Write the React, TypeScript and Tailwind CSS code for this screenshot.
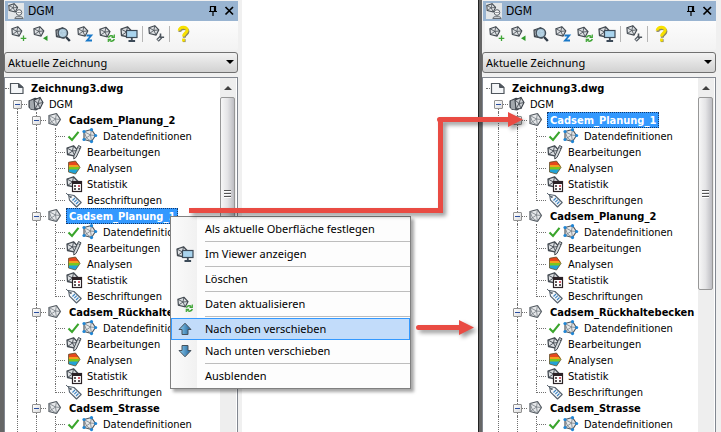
import type { ReactNode } from "react";
import { clsx } from "clsx";

/* ---------- icons ---------- */

const Mesh = ({ nodes = false }: { nodes?: boolean }) => (
  <g>
    <path
      d="M2 3.5 9.5 1.5 13.5 7.5 9.5 13.5 2 11.5Z"
      fill="#e6e8ea"
      stroke="#50575e"
      strokeWidth="1.2"
      strokeLinejoin="round"
    />
    <path
      d="M2 3.5 8.5 7 9.5 1.5M8.5 7 13.5 7.5M8.5 7 9.5 13.5M8.5 7 2 11.5M2 3.5 4.5 10 9.5 13.5"
      fill="none"
      stroke="#757c83"
      strokeWidth="0.8"
    />
    {nodes && (
      <g fill="#1f86d6">
        <circle cx="2" cy="3.5" r="1.6" />
        <circle cx="9.5" cy="1.7" r="1.6" />
        <circle cx="13.6" cy="7.5" r="1.6" />
        <circle cx="9.5" cy="13.6" r="1.6" />
        <circle cx="2" cy="11.5" r="1.6" />
      </g>
    )}
  </g>
);

const SmallMesh = () => (
  <g>
    <path
      d="M1 3 7.5 .8 12 5.5 9 11.2 1.5 9.5Z"
      fill="#dde0e3"
      stroke="#434a51"
      strokeWidth="1.3"
      strokeLinejoin="round"
    />
    <path
      d="M1 3 6.5 6 7.5.8M6.5 6 12 5.5M6.5 6 9 11.2M6.5 6 1.5 9.5"
      fill="none"
      stroke="#434a51"
      strokeWidth=".9"
    />
  </g>
);

const Icon = ({ children }: { children: ReactNode }) => (
  <svg
    viewBox="0 0 16 16"
    aria-hidden="true"
    className="size-4 shrink-0 overflow-visible"
  >
    {children}
  </svg>
);

const MeshIcon = () => (
  <Icon>
    <Mesh />
  </Icon>
);

const NodesIcon = () => (
  <Icon>
    <Mesh nodes />
  </Icon>
);

const FileIcon = () => (
  <Icon>
    <path
      d="M1.5 3.5h8l4.5 4v6H1.5Z"
      fill="#f4f6f8"
      stroke="#50575e"
      strokeWidth="1.2"
    />
    <path d="M9.5 3.5v4H14Z" fill="#50575e" stroke="#50575e" />
  </Icon>
);

const GroupIcon = () => (
  <Icon>
    <path
      d="M1 5 7 2.2 11 3v9l-3 2-5-.8L1 11Z"
      fill="#7a8188"
      stroke="#3c434a"
      strokeWidth="1.1"
    />
    <path d="M3 4.5v8.5M5 4v9.5" stroke="#d5d9dc" strokeWidth=".9" />
    <path
      d="M6 4 12 1.5 15 6.5 12 12.5 7 13Z"
      fill="#cdd1d5"
      stroke="#3c434a"
      strokeWidth="1.1"
    />
    <path
      d="M6 4 10 7.5 12 1.5M10 7.5 15 6.5M10 7.5 12 12.5M10 7.5 7 13"
      fill="none"
      stroke="#3c434a"
      strokeWidth=".8"
    />
  </Icon>
);

const CheckIcon = () => (
  <Icon>
    <path
      d="M3.5 8.5 7 12 13.5 3.8"
      fill="none"
      stroke="#3aa52c"
      strokeWidth="2.1"
    />
  </Icon>
);

const EditIcon = () => (
  <Icon>
    <g transform="translate(0 1)">
      <SmallMesh />
    </g>
    <path
      d="M12.5 1.5 15 2.8 10.2 13.2 7.8 15 7.8 12Z"
      fill="#d4d8db"
      stroke="#434a51"
      strokeWidth="1"
    />
    <path d="M12.5 3.8 14 4.6" stroke="#434a51" />
  </Icon>
);

const AnalysisIcon = () => (
  <Icon>
    <path d="M2.5 2 9.5 1 13.4 5.5H2.5Z" fill="#e8471c" />
    <path d="M2.5 5h10.6l1 2.5H2.5Z" fill="#f2a01e" />
    <path d="M2.5 7h11.4l-1.6 3H2.5Z" fill="#7cc61c" />
    <path d="M2.5 9.6h10.2L9.5 14l-7-2Z" fill="#22a3d6" />
    <path
      d="M2.5 2.4 9.5 1 14 7.5 9.5 14 2.5 12Z"
      fill="none"
      stroke="#60502c"
      strokeWidth=".8"
    />
  </Icon>
);

const StatisticIcon = () => (
  <Icon>
    <SmallMesh />
    <rect
      x="6.5"
      y="5.5"
      width="9"
      height="10"
      fill="#fff"
      stroke="#2b2226"
      strokeWidth="1.2"
    />
    <path d="M6 6.8h10" stroke="#2b2226" strokeWidth="2.4" />
    <path d="M8 10h2M8 13h2M12 13h2" stroke="#2b2226" strokeWidth="1.7" />
    <path d="M12 10h2" stroke="#c8283c" strokeWidth="1.7" />
  </Icon>
);

const TagIcon = () => (
  <Icon>
    <path
      d="M2.5 2.5 8 3.5 15.2 10.5 10.5 15 3.5 8.2Z"
      fill="#f2f5f8"
      stroke="#56616c"
      strokeWidth="1.1"
      strokeLinejoin="round"
    />
    <path d="M0 1 4 4.8" stroke="#56616c" />
    <circle cx="4.8" cy="5" r="1" fill="#56616c" />
    <path
      d="M6.5 8.5 9 6M8.3 10.2 10.8 7.7M10 12 12.5 9.5"
      stroke="#3d84c2"
      strokeWidth="1.1"
    />
  </Icon>
);

const RefreshIcon = () => (
  <Icon>
    <g transform="translate(0 .5) scale(.92)">
      <SmallMesh />
    </g>
    <g fill="none" stroke="#3fa535" strokeWidth="1.5">
      <path d="M9.4 11.8a3 3 0 0 1 5-1.2M15.3 13a3 3 0 0 1-5 1.3" />
      <path d="M15.3 8.6v2.7h-2.8M9.3 16v-2.6h2.8" strokeWidth="1.2" />
    </g>
  </Icon>
);

const ViewerIcon = () => (
  <Icon>
    <g transform="translate(-1 0)">
      <SmallMesh />
    </g>
    <rect
      x="5.5"
      y="4.5"
      width="10.5"
      height="7"
      fill="#a9d4ee"
      stroke="#3c4a58"
      strokeWidth="1.2"
    />
    <path d="M10.8 11.5v3M7.5 15h6.6" stroke="#3c4a58" strokeWidth="1.8" />
  </Icon>
);

const AddIcon = () => (
  <Icon>
    <g transform="scale(.9)">
      <SmallMesh />
    </g>
    <path d="M12.5 9.5v5.6M9.7 12.3h5.6" stroke="#3fa535" strokeWidth="1.3" />
  </Icon>
);

const ImportIcon = () => (
  <Icon>
    <g transform="scale(.9)">
      <SmallMesh />
    </g>
    <path d="M14.5 9.5v5.6L10 12.3Z" fill="#2f9a2a" />
  </Icon>
);

const SearchIcon = () => (
  <Icon>
    <g transform="translate(0 1)">
      <SmallMesh />
    </g>
    <path d="m11 11 3.8 4" stroke="#2f3a46" strokeWidth="2.4" />
    <circle
      cx="7.8"
      cy="7"
      r="4.7"
      fill="#b4d3e6"
      fillOpacity=".9"
      stroke="#44505b"
      strokeWidth="1.5"
    />
  </Icon>
);

const ElevationIcon = () => (
  <Icon>
    <g transform="scale(.9)">
      <SmallMesh />
    </g>
    <path
      d="M9.5 9.5h4.8L10 14.5h5"
      fill="none"
      stroke="#1878c8"
      strokeWidth="1.8"
    />
  </Icon>
);

const SettingsIcon = () => (
  <Icon>
    <g transform="translate(0 -1) scale(.9)">
      <SmallMesh />
    </g>
    <path d="m9.5 14.5 3.5-3.5" stroke="#4b535b" strokeWidth="3.4" />
    <path
      d="M12.5 7.5v3.8h3.6"
      fill="none"
      stroke="#4b535b"
      strokeWidth="1.6"
    />
    <path d="m9.8 14.2 2.4-2.4" stroke="#e5e8ea" strokeWidth="1.2" />
  </Icon>
);

const HelpIcon = () => (
  <Icon>
    <g fill="none" strokeWidth="3">
      <path
        d="M4.2 5.2C4 .8 12.6.6 12.2 5 12 7.8 8.5 7.6 8.5 11"
        stroke="#8a8468"
        transform="translate(.7 .7)"
      />
      <path
        d="M4.2 4.6C4 .2 12.6 0 12.2 4.4 12 7.2 8.5 7 8.5 10.6"
        stroke="#f7e000"
      />
      <path d="M7.8 14.6h2.8" stroke="#8a8468" />
      <path d="M7.1 14h2.8" stroke="#f7e000" />
    </g>
  </Icon>
);

const ArrowGlyph = ({ down = false }: { down?: boolean }) => (
  <Icon>
    <defs>
      <linearGradient id={down ? "down" : "up"}>
        <stop offset="0" stopColor="#8fd0f2" />
        <stop offset="1" stopColor="#1c5f98" />
      </linearGradient>
    </defs>
    <path
      d={
        down
          ? "M5 2.5h6v5h3L8 13.8 2 7.5h3Z"
          : "M8 2.2 14 8.5h-3v5H5v-5H2Z"
      }
      fill={down ? "url(#down)" : "url(#up)"}
      stroke="#47525c"
      strokeWidth="1"
    />
  </Icon>
);

const AppIcon = () => (
  <Icon>
    <rect width="16" height="16" fill="#e3e6e8" />
    <g transform="scale(.8)">
      <SmallMesh />
    </g>
    <circle cx="11" cy="9.5" r="2.8" fill="#f5f5f5" stroke="#5b6269" />
    <path
      d="M6.8 15.5c.2-3 8-3 8.4 0Z"
      fill="#c9cdd0"
      stroke="#5b6269"
      strokeWidth=".9"
    />
    <path d="M9.6 9.5h1M11.5 9.5h1" stroke="#3c434a" />
  </Icon>
);

/* ---------- tree ---------- */

// one 19px column of dotted connector lines
const Guide = ({
  branch = false,
  last = false,
}: {
  branch?: boolean;
  last?: boolean;
}) => (
  <span className="h-4 w-[19px] shrink-0 pl-[9px]">
    <span
      className={clsx(
        "block border-l border-dotted border-[#707070]",
        last ? "h-[9px]" : "h-4"
      )}
    >
      {branch && (
        <span className="block h-[9px] border-b border-dotted border-[#707070]" />
      )}
    </span>
  </span>
);

const Expander = ({ root = false }: { root?: boolean }) => (
  <span className="relative h-4 w-[19px] shrink-0">
    <span
      className={clsx(
        "absolute bottom-0 left-[9px] border-l border-dotted border-[#707070]",
        root ? "h-2" : "h-4"
      )}
    />
    <span className="absolute top-2 right-0 w-2 border-b border-dotted border-[#707070]" />
    <button
      aria-label="Zuklappen"
      className="absolute top-1 left-[5px] flex size-[9px] items-center justify-center rounded-[1px] border border-[#919191] bg-linear-to-br from-white to-[#dcdcdc]"
    >
      <span className="h-px w-[5px] bg-[#2b4fa0]" />
    </button>
  </span>
);

const entries = [
  { label: "Datendefinitionen", icon: <NodesIcon />, checked: true },
  { label: "Bearbeitungen", icon: <EditIcon /> },
  { label: "Analysen", icon: <AnalysisIcon /> },
  { label: "Statistik", icon: <StatisticIcon /> },
  { label: "Beschriftungen", icon: <TagIcon />, last: true },
];

type SurfaceData = { name: string; entryCount: number };

const Surface = ({
  surface,
  selected,
}: {
  surface: SurfaceData;
  selected: boolean;
}) => (
  <li>
    <div className="flex h-4 items-center pl-[3px]">
      <Guide />
      <Expander />
      <span className="flex w-5 shrink-0 pl-px">
        <MeshIcon />
      </span>
      <span
        className={clsx(
          "h-4 px-[3px] font-bold",
          selected &&
            "bg-[#3399ff] text-white outline-1 -outline-offset-1 outline-dotted outline-[#14396b]"
        )}
      >
        {surface.name}
      </span>
    </div>
    <ul>
      {entries.slice(0, surface.entryCount).map((entry) => (
        <li key={entry.label} className="flex h-4 items-center pl-[3px]">
          <Guide />
          <Guide />
          <Guide branch last={entry.last} />
          {entry.checked && <CheckIcon />}
          <span className="flex pl-px">{entry.icon}</span>
          <span className="h-4 pl-[5px]">{entry.label}</span>
        </li>
      ))}
    </ul>
  </li>
);

const Tree = ({
  surfaces,
  selected,
  indented,
}: {
  surfaces: SurfaceData[];
  selected: string;
  indented: boolean;
}) => (
  <div
    className={clsx(
      "min-w-0 flex-1 overflow-hidden pt-[2px] leading-[18px] whitespace-nowrap",
      indented && "pl-[3px]"
    )}
  >
    <div className="flex h-4 items-center">
      <span className="w-1 border-b border-dotted border-[#707070]" />
      <FileIcon />
      <span className="h-4 pl-[6px] font-bold">Zeichnung3.dwg</span>
    </div>
    <div className="flex h-4 items-center pl-[3px]">
      <Expander root />
      <span className="flex pl-px">
        <GroupIcon />
      </span>
      <span className="h-4 pl-[5px]">DGM</span>
    </div>
    <ul>
      {surfaces.map((surface) => (
        <Surface
          key={surface.name}
          surface={surface}
          selected={surface.name === selected}
        />
      ))}
    </ul>
  </div>
);

const Scrollbar = () => (
  <div className="mr-px flex w-4 shrink-0 flex-col bg-[#eeeeee] pt-px">
    <div className="flex h-[18px] items-center justify-center">
      <svg viewBox="0 0 8 4" className="h-1 w-2" aria-hidden="true">
        <path d="M4 0 8 4H0Z" fill="#404040" />
      </svg>
    </div>
    <div className="flex h-[193px] w-[15px] flex-col items-center justify-center gap-px rounded-xs border border-[#979797] bg-linear-to-r from-[#f7f7f7] via-[#e4e4e6] to-[#bdbdc2]">
      <span className="h-[2px] w-[7px] border-t border-[#555555] bg-white" />
      <span className="h-[2px] w-[7px] border-t border-[#555555] bg-white" />
      <span className="h-[2px] w-[7px] border-t border-[#555555] bg-white" />
    </div>
  </div>
);

/* ---------- palette ---------- */

const tools = [
  { label: "Neu", icon: <AddIcon /> },
  { label: "Importieren", icon: <ImportIcon /> },
  { label: "Suchen", icon: <SearchIcon /> },
  { label: "Höhe", icon: <ElevationIcon /> },
  { label: "Aktualisieren", icon: <RefreshIcon /> },
  { label: "Viewer", icon: <ViewerIcon /> },
];

const ToolButton = ({
  label,
  children,
}: {
  label: string;
  children: ReactNode;
}) => (
  <button
    aria-label={label}
    className="flex h-[22px] w-[22px] items-center justify-center"
  >
    {children}
  </button>
);

const Divider = () => <span className="mx-[2px] h-4 w-px bg-[#b5b5b5]" />;

const Palette = ({
  surfaces,
  selected,
  docked = false,
}: {
  surfaces: SurfaceData[];
  selected: string;
  docked?: boolean;
}) => (
  <section
    className={clsx(
      "flex shrink-0 bg-[#f0f0f0]",
      docked ? "w-[243px]" : "w-[242px]"
    )}
  >
    <div
      className={clsx(
        "w-1 shrink-0 bg-[#666666]",
        docked && "border-l border-[#222222]"
      )}
    />
    <div
      className={clsx(
        "flex min-w-0 flex-1 flex-col pt-px",
        docked ? "pr-[5px]" : "pr-1"
      )}
    >
      <header className="ml-px flex h-5 shrink-0 items-center bg-[#99b4d1] px-[3px]">
        <AppIcon />
        <h2 className="flex-1 pl-1 text-[12px] leading-4">DGM</h2>
        <button aria-label="Anheften" className="mr-1 flex size-3">
          <svg viewBox="0 0 12 12" className="size-3">
            <path
              d="M3.5 6.5v-5h5v5M2 6.5h8M6 7v4M7.5 2v4.5"
              fill="none"
              stroke="#000"
              strokeWidth="1.2"
            />
          </svg>
        </button>
        <button aria-label="Schließen" className="flex size-3">
          <svg viewBox="0 0 12 12" className="size-3">
            <path d="m2.5 2 7.5 7.5M10 2 2.5 9.5" stroke="#000" strokeWidth="1.7" />
          </svg>
        </button>
      </header>
      <div className="ml-[3px] flex h-[29px] shrink-0 items-center rounded-b-xs bg-linear-to-b from-[#fcfcfc] to-[#f3f3f3] pb-[3px] pl-px">
        {tools.map((tool) => (
          <ToolButton key={tool.label} label={tool.label}>
            {tool.icon}
          </ToolButton>
        ))}
        <Divider />
        <ToolButton label="Einstellungen">
          <SettingsIcon />
        </ToolButton>
        <Divider />
        <ToolButton label="Hilfe">
          <HelpIcon />
        </ToolButton>
      </div>
      <div className="relative mt-[2px] shrink-0">
        <select
          aria-label="Zeichnung"
          className="block h-[21px] w-full appearance-none rounded-[3px] border border-[#707070] bg-linear-to-b from-[#f2f2f2] to-[#d2d2d2] pl-[3px] font-['Noto_Sans',sans-serif] leading-4"
        >
          <option>Aktuelle Zeichnung</option>
        </select>
        <svg
          viewBox="0 0 8 4"
          className="pointer-events-none absolute top-2 right-1 h-1 w-2"
          aria-hidden="true"
        >
          <path d="M0 0H8L4 4Z" fill="#000" />
        </svg>
      </div>
      <div className="mt-1 flex min-h-0 flex-1 border border-b-0 border-[#828790] bg-white">
        <Tree surfaces={surfaces} selected={selected} indented={docked} />
        <Scrollbar />
      </div>
    </div>
  </section>
);

/* ---------- context menu ---------- */

const menu = [
  { label: "Als aktuelle Oberfläche festlegen", separated: true },
  { label: "Im Viewer anzeigen", icon: <ViewerIcon />, separated: true },
  { label: "Löschen", separated: true },
  { label: "Daten aktualisieren", icon: <RefreshIcon />, separated: true },
  { label: "Nach oben verschieben", icon: <ArrowGlyph />, active: true },
  {
    label: "Nach unten verschieben",
    icon: <ArrowGlyph down />,
    separated: true,
  },
  { label: "Ausblenden" },
];

const ContextMenu = () => (
  <div
    role="menu"
    className="absolute top-[216px] left-[170px] w-[241px] border border-[#808080] bg-[#fdfdfd] bg-linear-to-r from-[#fbfbfb] to-[#f1f1f1] bg-[length:26px_100%] bg-no-repeat py-px font-['Noto_Sans',sans-serif] text-[11px] shadow-[3px_3px_3px_rgba(0,0,0,0.35)]"
  >
    {menu.map((item) => (
      <div key={item.label}>
        <button
          role="menuitem"
          className={clsx(
            "flex h-[22px] w-full items-center border px-[5px] text-left leading-4",
            item.active
              ? "border-[#3399ff] bg-[#c2dcfa]"
              : "border-transparent"
          )}
        >
          <span className="w-7 shrink-0">{item.icon}</span>
          {item.label}
        </button>
        {item.separated && (
          <div className="my-px ml-[34px] h-px bg-[#bdbdbd]" />
        )}
      </div>
    ))}
  </div>
);

const Arrows = () => (
  <svg
    viewBox="0 0 721 432"
    aria-hidden="true"
    className="pointer-events-none absolute top-0 left-0 h-[432px] w-[721px] drop-shadow-[3px_3px_2px_rgba(0,0,0,0.4)]"
  >
    <g fill="none" stroke="#e94b43" strokeWidth="5">
      <path d="M189 210.5H440.5V119.5" />
      <path d="M439.5 119.5H510M418.5 327.5H461" strokeLinecap="round" />
    </g>
    <path
      d="M508 112 523 119.5 508 127ZM459 320 474 327.5 459 335Z"
      fill="#e94b43"
    />
  </svg>
);

const planung1 = { name: "Cadsem_Planung_1", entryCount: 5 };
const planung2 = { name: "Cadsem_Planung_2", entryCount: 5 };
const becken = { name: "Cadsem_Rückhaltebecken", entryCount: 5 };
const strasse = { name: "Cadsem_Strasse", entryCount: 1 };

export default function App() {
  return (
    <main className="relative flex h-screen justify-between overflow-hidden bg-white font-['DejaVu_Sans_Condensed','DejaVu_Sans',sans-serif] text-[11px] text-black">
      <Palette
        surfaces={[planung2, planung1, becken, strasse]}
        selected={planung1.name}
      />
      <Palette
        surfaces={[planung1, planung2, becken, strasse]}
        selected={planung1.name}
        docked
      />
      <ContextMenu />
      <Arrows />
    </main>
  );
}
